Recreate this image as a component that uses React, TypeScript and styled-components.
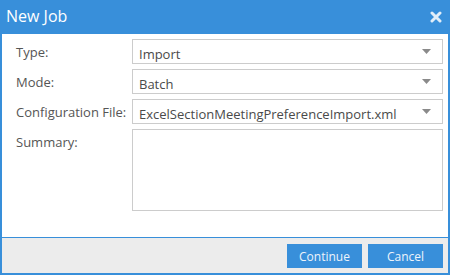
import React from "react";
import styled, { createGlobalStyle } from "styled-components";

const blue = "#388fda";

const GlobalStyle = createGlobalStyle`
  * { box-sizing: border-box; }
  body {
    margin: 0;
    font-family: "Open Sans", "Liberation Sans", sans-serif;
    background: #fff;
  }
`;

const Dialog = styled.div`
  width: 450px;
  height: 275px;
  display: flex;
  flex-direction: column;
  border: 2px solid ${blue};
  border-top: none;
  background: ${blue};
`;

const TitleBar = styled.div`
  height: 34px;
  display: flex;
  align-items: center;
  justify-content: space-between;
  padding: 0 6px 0 4px;
  color: #fff;
`;

const Title = styled.span`
  font-size: 16px;
  margin-top: -2px;
`;

const CloseButton = styled.button`
  border: none;
  background: none;
  padding: 0;
  display: flex;
  opacity: 0.85;
  cursor: pointer;
`;

const Body = styled.div`
  flex: 1;
  background: #fff;
  padding: 5px 5px 0 14px;
`;

const Form = styled.div`
  display: grid;
  grid-template-columns: 116px 1fr;
  row-gap: 5px;
`;

const Label = styled.label`
  font-size: 13px;
  color: #555;
  padding-top: 4px;
`;

const Select = styled.div`
  height: 25px;
  border: 1px solid #ccc;
  display: flex;
  align-items: center;
  justify-content: space-between;
  padding-left: 6px;
  padding-right: 11px;
  font-size: 13px;
  color: #4a4a4a;
`;

const SelectValue = styled.span`
  padding-top: 4px;
`;

const Summary = styled.textarea`
  height: 82px;
  border: 1px solid #ccc;
  resize: none;
  font-family: inherit;
  font-size: 13px;
  outline: none;
`;

const Footer = styled.div`
  height: 36px;
  border-top: 1px solid ${blue};
  background: #ececec;
  display: flex;
  justify-content: flex-end;
  gap: 6px;
  padding: 6px 5px 0 0;
`;

const Button = styled.button`
  width: 75px;
  height: 24px;
  border: none;
  background: ${blue};
  color: #eef4fb;
  font-family: inherit;
  font-size: 12px;
  cursor: pointer;
`;

function Arrow() {
  return (
    <svg width="9" height="5" viewBox="0 0 9 5">
      <path d="M0 0 H9 L4.5 5 Z" fill="#8a8a8a" />
    </svg>
  );
}

function Dropdown({ value }: { value: string }) {
  return (
    <Select>
      <SelectValue>{value}</SelectValue>
      <Arrow />
    </Select>
  );
}

export default function App() {
  return (
    <>
      <GlobalStyle />
      <Dialog>
        <TitleBar>
          <Title>New Job</Title>
          <CloseButton aria-label="Close">
            <svg width="12" height="12" viewBox="0 0 12 12">
              <path
                d="M2 2 L10 10 M10 2 L2 10"
                stroke="#fff"
                strokeWidth="3"
                strokeLinecap="round"
              />
            </svg>
          </CloseButton>
        </TitleBar>
        <Body>
          <Form>
            <Label>Type:</Label>
            <Dropdown value="Import" />
            <Label>Mode:</Label>
            <Dropdown value="Batch" />
            <Label>Configuration File:</Label>
            <Dropdown value="ExcelSectionMeetingPreferenceImport.xml" />
            <Label>Summary:</Label>
            <Summary />
          </Form>
        </Body>
        <Footer>
          <Button>Continue</Button>
          <Button>Cancel</Button>
        </Footer>
      </Dialog>
    </>
  );
}
